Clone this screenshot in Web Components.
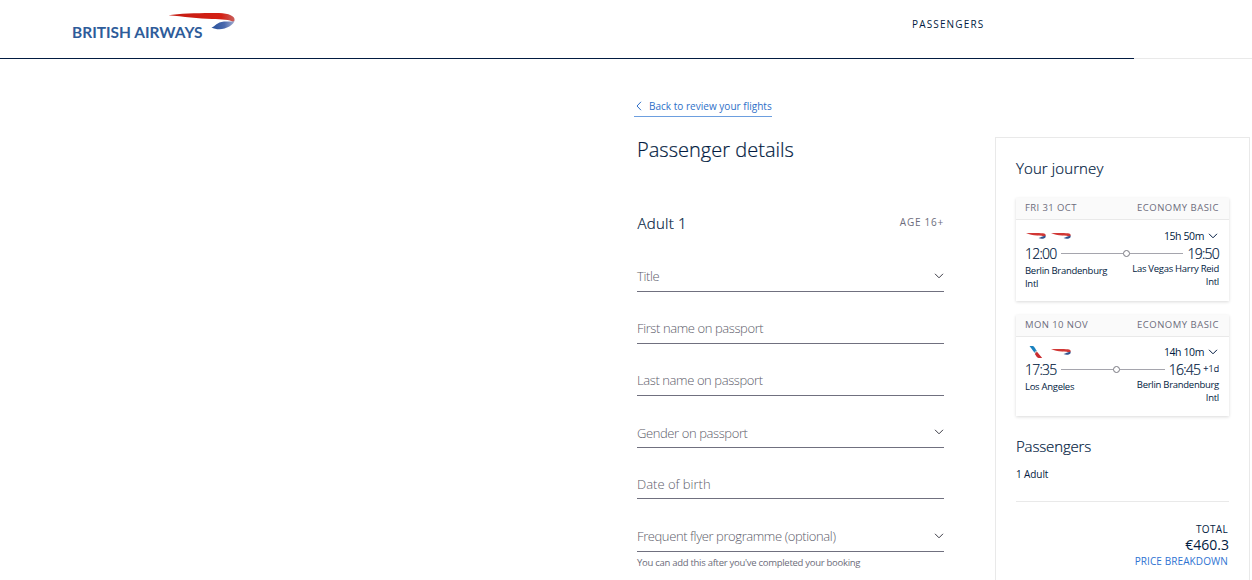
<!DOCTYPE html>
<html lang="en">
<head>
<meta charset="utf-8">
<title>Passenger details</title>
<style>
  body {
    margin: 0;
    height: 580px;
    overflow: hidden;
    background: #fff;
    color: #021b41;
    font-family: "Open Sans", "Noto Sans", sans-serif;
    font-size: 10px;
  }
</style>
</head>
<body>
<booking-page></booking-page>

<script>
const chevron = (w = 10, h = 6) => `
  <svg width="${w}" height="${h}" viewBox="0 0 10 6" fill="none" stroke="currentColor" stroke-width="1">
    <path d="M1 .8 5 4.8 9 .8"/>
  </svg>`;

const airlineLogos = {
  ba: `
    <svg width="22" height="9" viewBox="0 0 22 9">
      <path d="M1 2.200C7 1.700 14 1.900 18 2.300c3 .5 3.400 2.200 1.800 3.300C18 4.800 16 4.800 12 4.500 8 4.100 4 3.300 1 2.200Z" fill="#d13735"/>
      <path d="M13.500 7C16 6.300 17 5.500 20.500 4.500c.6 1.500-.3 2.500-1.700 3-2 .6-3.700.2-5.300-.5Z" fill="#32558f"/>
    </svg>`,
  aa: `
    <svg width="22" height="14" viewBox="0 0 22 14">
      <path d="M4.500 1h2.900c1.500 0 2 1.200 4.400 5L9.700 7.800C7.400 5.300 6.500 3.400 4.500 1Z" fill="#1a82bf"/>
      <path d="M9.500 7 11 5.500l1 1.800-1.600 1.800Z" fill="#b5bcc2"/>
      <path d="m9.800 9 2.200-2.200 5.200 6.200h-3c-1.800 0-2.200-.8-4.400-4Z" fill="#c92d30"/>
    </svg>`
};

class SiteHeader extends HTMLElement {
  constructor() {
    super();
    this.attachShadow({ mode: "open" });
  }

  connectedCallback() {
    this.shadowRoot.innerHTML = `
      <style>
        :host { display: block; }
        .bar {
          display: flex;
          height: 58px;
        }
        .logo { margin: 10px 0 0 70px; }
        .step {
          margin: 17px 0 0 672px;
          line-height: 14px;
          letter-spacing: 1.15px;
        }
        .progress {
          height: 1px;
          background: #e9e9e9;
        }
        .progress div {
          width: 1134px;
          height: 1px;
          background: #021b41;
        }
      </style>
      <div class="bar">
        <svg class="logo" width="170" height="34" viewBox="70 10 170 34">
          <defs>
            <linearGradient id="red" x1="0" x2="1">
              <stop offset="0" stop-color="#c41c13"/>
              <stop offset=".8" stop-color="#d42014"/>
              <stop offset="1" stop-color="#c8605c"/>
            </linearGradient>
            <linearGradient id="blue" x1="0" x2="1">
              <stop offset="0" stop-color="#26509a"/>
              <stop offset=".55" stop-color="#4b69ad"/>
              <stop offset="1" stop-color="#a3add0"/>
            </linearGradient>
          </defs>
          <text x="72" y="38" textLength="130.500" lengthAdjust="spacingAndGlyphs"
            font-family="Lato" font-size="16" font-weight="700" fill="#2e5c9a">BRITISH AIRWAYS</text>
          <path d="M168.500 15.200C181 13.300 206 12.700 219 13.100c10 .4 16 3.100 15.600 6.900-.2 1-.8 1.700-1.500 2C230 19.700 222 19.300 212 19c-13-.3-29-2.600-43.500-3.800Z" fill="url(#red)"/>
          <path d="M234.700 20.100c-.4 5-8.700 9-15.200 9.200-3.200 0-5.800-.8-8-1.800 4-1.200 5-5.400 12.500-6.100 5-.1 8 .5 9.600 0 .5-.4.800-.8 1.100-1.300Z" fill="url(#blue)"/>
        </svg>
        <div class="step"><slot></slot></div>
      </div>
      <div class="progress"><div></div></div>
    `;
  }
}

class FormField extends HTMLElement {
  constructor() {
    super();
    this.attachShadow({ mode: "open" });
  }

  connectedCallback() {
    this.shadowRoot.innerHTML = `
      <style>
        :host {
          display: flex;
          box-sizing: border-box;
          height: 52px;
          align-items: flex-end;
          justify-content: space-between;
          padding-bottom: 5px;
          border-bottom: 1px solid #70707f;
          color: #5c5c6a;
          font-size: 13px;
          font-weight: 300;
          letter-spacing: -.4px;
          line-height: 20px;
        }
        :host([low]) span { margin-bottom: -1px; }
        svg {
          margin-bottom: 7px;
          color: #3c3c46;
        }
      </style>
      <span><slot></slot></span>
      ${this.hasAttribute("select") ? chevron() : ""}
    `;
  }
}

class FlightCard extends HTMLElement {
  constructor() {
    super();
    this.attachShadow({ mode: "open" });
  }

  connectedCallback() {
    const get = name => this.getAttribute(name) || "";
    const logos = get("airlines").split(" ").map(code => airlineLogos[code]).join("");
    const extra = get("extra") ? `<span class="extra">${get("extra")}</span>` : "";

    this.shadowRoot.innerHTML = `
      <style>
        :host {
          display: block;
          box-sizing: border-box;
          background: #fff;
          box-shadow: 0 1px 3px rgba(0, 0, 0, .15);
        }
        header {
          display: flex;
          justify-content: space-between;
          box-sizing: border-box;
          height: 22px;
          padding: 0 10px 0 9px;
          border-bottom: 1px solid #e9e9e9;
          background: #fafafa;
          color: #6d6d7c;
          font-size: 9.500px;
          letter-spacing: .5px;
          line-height: 20px;
        }
        header span:first-child { letter-spacing: .4px; }
        .body { padding: var(--body-top, 6px) 10px 0 9px; }
        .row {
          display: flex;
          justify-content: space-between;
        }
        .logos {
          display: flex;
          gap: 3px;
          height: 19px;
          align-items: center;
        }
        .duration {
          display: flex;
          align-items: center;
          gap: 4px;
          height: 20px;
          margin: 0 1px 1px 0;
          font-size: 10.500px;
          letter-spacing: -.4px;
        }
        .times {
          display: flex;
          align-items: center;
          height: 13px;
          font-size: 14px;
          font-weight: 300;
          letter-spacing: -.75px;
          -webkit-text-stroke: .2px;
        }
        .line {
          display: flex;
          flex: 1;
          align-items: center;
          margin: 0 4px;
        }
        .line::before, .line::after {
          content: "";
          flex: 1;
          height: 1px;
          background: #a5a5ad;
        }
        .line::before { flex: 0 0 calc(50% + .5px); }
        .line i {
          width: 5px;
          height: 5px;
          border: 1px solid #777780;
          border-radius: 50%;
        }
        .extra {
          padding: 0 0 2px 3px;
          font-size: 9px;
          letter-spacing: 0;
        }
        .places {
          font-size: 9.500px;
          letter-spacing: -.28px;
          line-height: 13px;
        }
        .places div { width: 92px; }
        .from { padding-top: 4px; }
        .to {
          padding-top: 2px;
          text-align: right;
        }
      </style>
      <header><span>${get("date")}</span><span>${get("cabin")}</span></header>
      <div class="body">
        <div class="row">
          <div class="logos">${logos}</div>
          <div class="duration">${get("duration")}${chevron()}</div>
        </div>
        <div class="times">
          <span>${get("departs")}</span>
          <div class="line"><i></i></div>
          <span>${get("arrives")}</span>${extra}
        </div>
        <div class="row places">
          <div class="from">${get("from")}</div>
          <div class="to">${get("to")}</div>
        </div>
      </div>
    `;
  }
}

class JourneySummary extends HTMLElement {
  constructor() {
    super();
    this.attachShadow({ mode: "open" });
  }

  connectedCallback() {
    this.shadowRoot.innerHTML = `
      <style>
        :host {
          display: block;
          box-sizing: border-box;
          padding: 19px 20px 0;
          border: 1px solid #e9e9e9;
          border-bottom: 0;
        }
        h2 {
          margin: 0;
          font-size: 15px;
          font-weight: 300;
          line-height: 22px;
          letter-spacing: .1px;
          -webkit-text-stroke: .2px;
        }
        .passengers { letter-spacing: -.15px; }
        flight-card { height: 103px; }
        flight-card:first-of-type { margin-top: 19px; }
        flight-card + flight-card {
          --body-top: 5px;
          height: 101px;
          margin: 14px 0 19px;
        }
        p {
          margin: 9px 0 0;
          line-height: 16px;
          letter-spacing: -.1px;
        }
        .total {
          margin: 19px 0 0;
          padding: 19px 1px 0 0;
          border-top: 1px solid #e9e9e9;
          text-align: right;
          line-height: 16px;
        }
        .label { letter-spacing: .35px; }
        .price {
          margin-right: -1px;
          font-size: 14px;
        }
        .link {
          color: #2e73d2;
          letter-spacing: .1px;
        }
      </style>
      <h2>Your journey</h2>
      <flight-card date="FRI 31 OCT" cabin="ECONOMY BASIC" airlines="ba ba" duration="15h 50m"
        departs="12:00" arrives="19:50" from="Berlin Brandenburg Intl" to="Las Vegas Harry Reid Intl"></flight-card>
      <flight-card date="MON 10 NOV" cabin="ECONOMY BASIC" airlines="aa ba" duration="14h 10m"
        departs="17:35" arrives="16:45" extra="+1d" from="Los Angeles" to="Berlin Brandenburg Intl"></flight-card>
      <h2 class="passengers">Passengers</h2>
      <p>1 Adult</p>
      <div class="total">
        <div class="label">TOTAL</div>
        <div class="price">€460.3</div>
        <div class="link">PRICE BREAKDOWN</div>
      </div>
    `;
  }
}

class BookingPage extends HTMLElement {
  constructor() {
    super();
    this.attachShadow({ mode: "open" });
  }

  connectedCallback() {
    this.shadowRoot.innerHTML = `
      <style>
        :host { display: block; }
        main {
          display: grid;
          grid-template-columns: 307px 255px;
          column-gap: 51px;
          padding-left: 637px;
        }
        .form { padding-top: 37px; }
        .back {
          display: flex;
          width: fit-content;
          align-items: center;
          box-sizing: border-box;
          height: 21px;
          margin-left: -3px;
          padding: 0 0 0 2px;
          gap: 7px;
          border-bottom: 1px solid #6d9fdf;
          color: #2e6fc8;
          letter-spacing: .02px;
        }
        h1 {
          margin: 19px 0 0;
          font-size: 20px;
          font-weight: 300;
          line-height: 28px;
          letter-spacing: .02px;
          -webkit-text-stroke: .2px;
        }
        .adult {
          display: flex;
          justify-content: space-between;
          margin-top: 48px;
          height: 28px;
          line-height: 22px;
        }
        .adult h2 {
          margin: 0 0 0 .5px;
          font-size: 15px;
          font-weight: 300;
          letter-spacing: .25px;
          -webkit-text-stroke: .2px;
        }
        .adult span {
          color: #6d6d7c;
          letter-spacing: .75px;
          line-height: 20px;
        }
        .short {
          height: 51px;
          letter-spacing: 0;
        }
        .tall { height: 53px; }
        .hint {
          margin-top: 4px;
          color: #6c6c7a;
          font-size: 9.500px;
          letter-spacing: -.28px;
          line-height: 14px;
        }
        journey-summary {
          height: 443px;
          margin-top: 78px;
        }
      </style>
      <site-header>PASSENGERS</site-header>
      <main>
        <div class="form">
          <div class="back">
            <svg width="6" height="10" viewBox="0 0 6 10" fill="none" stroke="currentColor"><path d="M5 .8 1 5 5 9.200"/></svg>
            <span>Back to review your flights</span>
          </div>
          <h1>Passenger details</h1>
          <div class="adult"><h2>Adult 1</h2><span>AGE 16+</span></div>
          <form-field select>Title</form-field>
          <form-field>First name on passport</form-field>
          <form-field>Last name on passport</form-field>
          <form-field select low>Gender on passport</form-field>
          <form-field class="short" low>Date of birth</form-field>
          <form-field class="tall" select>Frequent flyer programme (optional)</form-field>
          <div class="hint">You can add this after you've completed your booking</div>
        </div>
        <journey-summary></journey-summary>
      </main>
    `;
  }
}

customElements.define("site-header", SiteHeader);
customElements.define("form-field", FormField);
customElements.define("flight-card", FlightCard);
customElements.define("journey-summary", JourneySummary);
customElements.define("booking-page", BookingPage);
</script>
</body>
</html>
